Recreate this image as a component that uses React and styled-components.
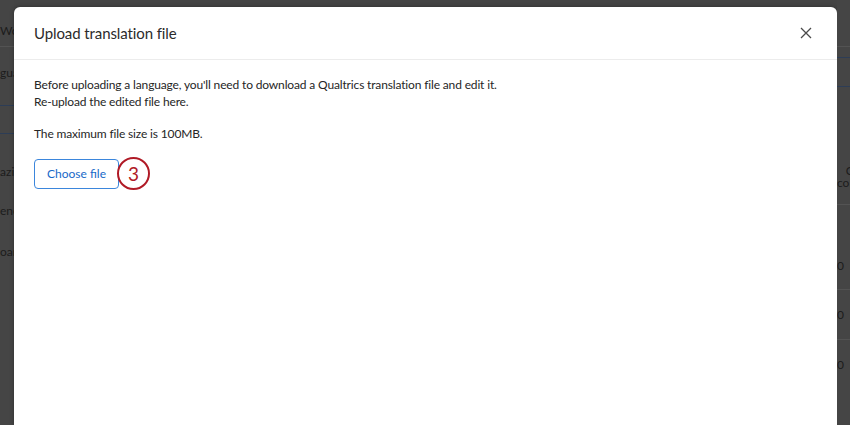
import styled, { createGlobalStyle } from "styled-components";

const Global = createGlobalStyle`
  html, body {
    margin: 0;
    padding: 0;
    height: 100%;
    overflow: hidden;
  }
  body {
    font-family: Lato, "Open Sans", "Liberation Sans", Arial, sans-serif;
    background: #444444;
  }
`;

export default function App() {
  return (
    <>
      <Global />
      <Page>
        <Strip side="left">
          <BgRow h={47} line="#535353" pad={24}>Wo</BgRow>
          <BgRow h={59} line="#2d3d56" pad={19}>gua</BgRow>
          <BgRow h={28} line="#2d3d56" />
          <BgRow h={40} pad={31}>azi</BgRow>
          <BgRow h={41} pad={30}>enc</BgRow>
          <BgRow h={41} pad={30}>oan</BgRow>
        </Strip>

        <Modal>
          <Header>
            <Title>Upload translation file</Title>
            <Close aria-label="close">
              <svg width="12" height="12" viewBox="0 0 12 12">
                <path d="M1 1 L11 11 M11 1 L1 11" stroke="#4a4a4a" strokeWidth="1.3" fill="none" />
              </svg>
            </Close>
          </Header>
          <Body>
            <Para>
              Before uploading a language, you'll need to download a Qualtrics translation file and edit it.
              <br />
              Re-upload the edited file here.
            </Para>
            <Para>The maximum file size is 100MB.</Para>
            <ButtonRow>
              <ChooseButton>Choose file</ChooseButton>
              <Step>3</Step>
            </ButtonRow>
          </Body>
        </Modal>

        <Strip side="right">
          <BgRow h={47} line="#535353" />
          <BgRow h={11} line="#2d3d56" />
          <BgRow h={29} line="#2d3d56" />
          <BgRow h={118} line="#535353" pad={78}>
            <Stack>
              <span>C</span>
              <span>cor</span>
            </Stack>
          </BgRow>
          <BgRow h={85} line="#535353" pad={54}>0</BgRow>
          <BgRow h={50} line="#535353" pad={18}>0</BgRow>
          <BgRow h={50} pad={18}>0</BgRow>
        </Strip>
      </Page>
    </>
  );
}

const Page = styled.div`
  display: grid;
  grid-template-columns: 14px 823px 13px;
  width: 850px;
  height: 425px;
  overflow: hidden;
`;

const Strip = styled.div`
  display: flex;
  flex-direction: column;
  align-items: ${(p) => (p.side === "left" ? "flex-end" : "flex-start")};
  background: #454545;
  overflow: hidden;
  font-size: 12px;
  color: #1c1c1c;
`;

const BgRow = styled.div`
  box-sizing: border-box;
  flex: none;
  width: 100%;
  height: ${(p) => p.h}px;
  padding-top: ${(p) => p.pad || 0}px;
  display: flex;
  justify-content: inherit;
  border-bottom: 1px solid ${(p) => p.line || "transparent"};
  white-space: nowrap;
  line-height: 14px;
`;

const Stack = styled.div`
  display: flex;
  flex-direction: column;
  align-items: flex-end;
  line-height: 12px;
`;

const Modal = styled.div`
  margin-top: 7px;
  background: #ffffff;
  border-radius: 6px 6px 0 0;
  box-shadow: 0 0 4px rgba(0, 0, 0, 0.35);
  display: flex;
  flex-direction: column;
`;

const Header = styled.div`
  display: flex;
  align-items: center;
  justify-content: space-between;
  height: 52px;
  padding: 0 21px 0 20px;
  border-bottom: 1px solid #ececec;
`;

const Title = styled.h2`
  margin: 0;
  font-size: 15px;
  font-weight: 400;
  letter-spacing: -0.1px;
  color: #2b2b2b;
`;

const Close = styled.button`
  display: flex;
  align-items: center;
  justify-content: center;
  width: 20px;
  height: 20px;
  padding: 0;
  border: none;
  background: transparent;
`;

const Body = styled.div`
  padding: 16px 20px;
`;

const Para = styled.p`
  margin: 0 0 15px;
  font-size: 12px;
  letter-spacing: -0.15px;
  line-height: 17px;
  color: #262626;
`;

const ButtonRow = styled.div`
  display: flex;
  align-items: center;
  margin-top: 10px;
`;

const ChooseButton = styled.button`
  height: 30px;
  padding: 0 12px;
  font-family: inherit;
  font-size: 12px;
  color: #1769c8;
  background: #ffffff;
  border: 1px solid #3b86dc;
  border-radius: 4px;
`;

const Step = styled.span`
  position: relative;
  left: -2px;
  display: flex;
  align-items: center;
  justify-content: center;
  box-sizing: border-box;
  width: 33px;
  height: 33px;
  border: 2.5px solid #b01a26;
  border-radius: 50%;
  background: #ffffff;
  color: #b01a26;
  font-size: 19px;
`;
